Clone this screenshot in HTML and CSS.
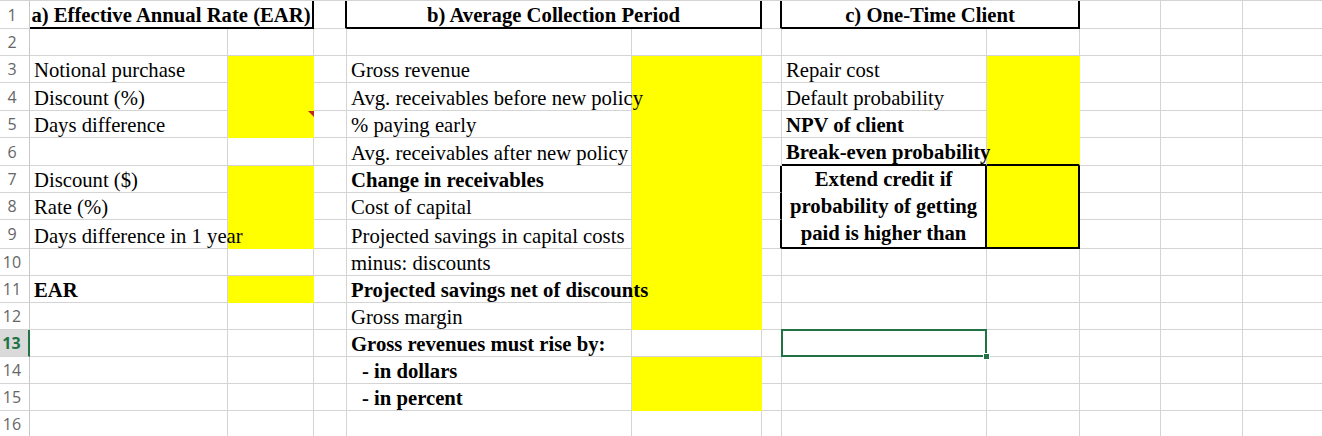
FILE: index.html
```html
<!DOCTYPE html>
<html lang="en">
<head>
  <meta charset="UTF-8">
  <title>Credit Policy Worksheet</title>
  <link rel="stylesheet" href="styles.css">
</head>
<body>
  <table class="sheet">
    <colgroup>
      <col class="w-hd">
      <col class="w-a"><col class="w-b"><col class="w-c">
      <col class="w-d"><col class="w-e"><col class="w-f">
      <col class="w-g"><col class="w-h"><col class="w-i">
      <col class="w-j"><col class="w-k">
    </colgroup>
    <tr class="h28">
      <td class="rh">1</td>
      <td class="title" colspan="2">a) Effective Annual Rate (EAR)</td>
      <td class="edge-r"></td>
      <td class="title" colspan="2">b) Average Collection Period</td>
      <td class="edge-r"></td>
      <td class="title" colspan="2">c) One-Time Client</td>
      <td></td><td></td><td></td>
    </tr>
    <tr>
      <td class="rh">2</td>
      <td></td><td></td><td></td><td></td><td></td><td></td><td></td><td></td><td></td><td></td><td></td>
    </tr>
    <tr>
      <td class="rh">3</td>
      <td>Notional purchase</td><td class="y"></td><td></td>
      <td>Gross revenue</td><td class="y"></td><td></td>
      <td>Repair cost</td><td class="y"></td>
      <td></td><td></td><td></td>
    </tr>
    <tr class="h28">
      <td class="rh">4</td>
      <td>Discount (%)</td><td class="y"></td><td></td>
      <td>Avg. receivables before new policy</td><td class="y"></td><td></td>
      <td>Default probability</td><td class="y"></td>
      <td></td><td></td><td></td>
    </tr>
    <tr>
      <td class="rh">5</td>
      <td>Days difference</td><td class="y note"></td><td></td>
      <td>% paying early</td><td class="y"></td><td></td>
      <td class="b">NPV of client</td><td class="y"></td>
      <td></td><td></td><td></td>
    </tr>
    <tr class="h28">
      <td class="rh">6</td>
      <td></td><td></td><td></td>
      <td>Avg. receivables after new policy</td><td class="y"></td><td></td>
      <td class="b edge-b">Break-even probability</td><td class="y edge-b"></td>
      <td></td><td></td><td></td>
    </tr>
    <tr>
      <td class="rh">7</td>
      <td>Discount ($)</td><td class="y"></td><td></td>
      <td class="b">Change in receivables</td><td class="y"></td><td class="edge-r"></td>
      <td class="box" rowspan="3">Extend credit if<br>probability of getting<br>paid is higher than</td>
      <td class="y box-y" rowspan="3"></td>
      <td></td><td></td><td></td>
    </tr>
    <tr>
      <td class="rh">8</td>
      <td>Rate (%)</td><td class="y"></td><td></td>
      <td>Cost of capital</td><td class="y"></td><td class="edge-r"></td>
      <td></td><td></td><td></td>
    </tr>
    <tr class="h29">
      <td class="rh">9</td>
      <td>Days difference in 1 year</td><td class="y"></td><td></td>
      <td>Projected savings in capital costs</td><td class="y"></td><td class="edge-r"></td>
      <td></td><td></td><td></td>
    </tr>
    <tr>
      <td class="rh">10</td>
      <td></td><td></td><td></td>
      <td>minus: discounts</td><td class="y"></td><td></td>
      <td></td><td></td><td></td><td></td><td></td>
    </tr>
    <tr>
      <td class="rh">11</td>
      <td class="b">EAR</td><td class="y"></td><td></td>
      <td class="b">Projected savings net of discounts</td><td class="y"></td><td></td>
      <td></td><td></td><td></td><td></td><td></td>
    </tr>
    <tr>
      <td class="rh">12</td>
      <td></td><td></td><td></td>
      <td>Gross margin</td><td class="y"></td><td></td>
      <td></td><td></td><td></td><td></td><td></td>
    </tr>
    <tr>
      <td class="rh active">13</td>
      <td></td><td></td><td></td>
      <td class="b">Gross revenues must rise by:</td><td></td><td></td>
      <td class="sel"></td><td></td><td></td><td></td><td></td>
    </tr>
    <tr>
      <td class="rh">14</td>
      <td></td><td></td><td></td>
      <td class="b indent">- in dollars</td><td class="y"></td><td></td>
      <td></td><td></td><td></td><td></td><td></td>
    </tr>
    <tr>
      <td class="rh">15</td>
      <td></td><td></td><td></td>
      <td class="b indent">- in percent</td><td class="y"></td><td></td>
      <td></td><td></td><td></td><td></td><td></td>
    </tr>
    <tr>
      <td class="rh">16</td>
      <td></td><td></td><td></td><td></td><td></td><td></td><td></td><td></td><td></td><td></td><td></td>
    </tr>
  </table>
</body>
</html>
```

FILE: styles.css
```css
body {
  margin: 0;
  background: #fff;
  overflow: hidden;
}
.sheet {
  border-collapse: separate;
  border-spacing: 0;
  table-layout: fixed;
  width: 1325px;
  border-top: 1px solid #d4d4d4;
  font-family: 'Liberation Serif', 'Times New Roman', serif;
  font-size: 20.7px;
  color: #000;
}
.w-hd { width: 30px; }
.w-a { width: 198px; }
.w-b { width: 86px; }
.w-c { width: 33px; }
.w-d { width: 285px; }
.w-e { width: 130px; }
.w-f { width: 20px; }
.w-g { width: 205px; }
.w-h { width: 93px; }
.w-i { width: 81px; }
.w-j { width: 82px; }
.w-k { width: 82px; }
.sheet tr {
  height: 27px;
}
.sheet tr.h28 {
  height: 28px;
}
.sheet tr.h29 {
  height: 29px;
}
.sheet td {
  border-right: 1px solid #d4d4d4;
  border-bottom: 1px solid #d4d4d4;
  padding: 0 0 0 4px;
  white-space: nowrap;
  vertical-align: bottom;
  line-height: 23px;
  overflow: visible;
}
.sheet td.rh {
  font-family: 'Open Sans', sans-serif;
  font-size: 16px;
  color: #666;
  text-align: center;
  vertical-align: middle;
  line-height: normal;
  padding: 0 5px 0 0;
  border-right-color: #c8c8c8;
}
.sheet td.rh.active {
  background: #dadada;
  color: #217346;
  font-weight: bold;
  border-right: 2px solid #217346;
}
.b {
  font-weight: bold;
}
.sheet td.indent {
  padding-left: 15px;
}
.sheet td.y {
  background: #ffff00;
  border-right-color: #ffff00;
  border-bottom-color: #ffff00;
}
.sheet td.title {
  font-weight: bold;
  text-align: center;
  padding: 0;
  overflow: hidden;
  border-right: 2px solid #000;
  border-bottom: 2px solid #000;
}
.sheet td.edge-r {
  border-right: 2px solid #000;
}
.sheet td.edge-b {
  border-bottom: 2px solid #000;
}
.sheet td.box {
  font-weight: bold;
  text-align: center;
  white-space: normal;
  vertical-align: middle;
  line-height: 27px;
  padding: 0;
  border-right: 2px solid #000;
  border-bottom: 2px solid #000;
}
.sheet td.box-y {
  border-right: 2px solid #000;
  border-bottom: 2px solid #000;
}
/* comment marker in the corner of a cell */
.note {
  position: relative;
}
.note::after {
  content: "";
  position: absolute;
  top: 0;
  right: -1px;
  border-left: 6px solid transparent;
  border-top: 6px solid #c0281e;
}
/* active cell selection */
.sel {
  position: relative;
}
.sel::before {
  content: "";
  position: absolute;
  left: -1px;
  top: -1px;
  right: -1px;
  bottom: -1px;
  border: 2px solid #217346;
}
.sel::after {
  content: "";
  position: absolute;
  right: -4px;
  bottom: -4px;
  width: 5px;
  height: 5px;
  background: #217346;
  border: 1px solid #fff;
}
```
